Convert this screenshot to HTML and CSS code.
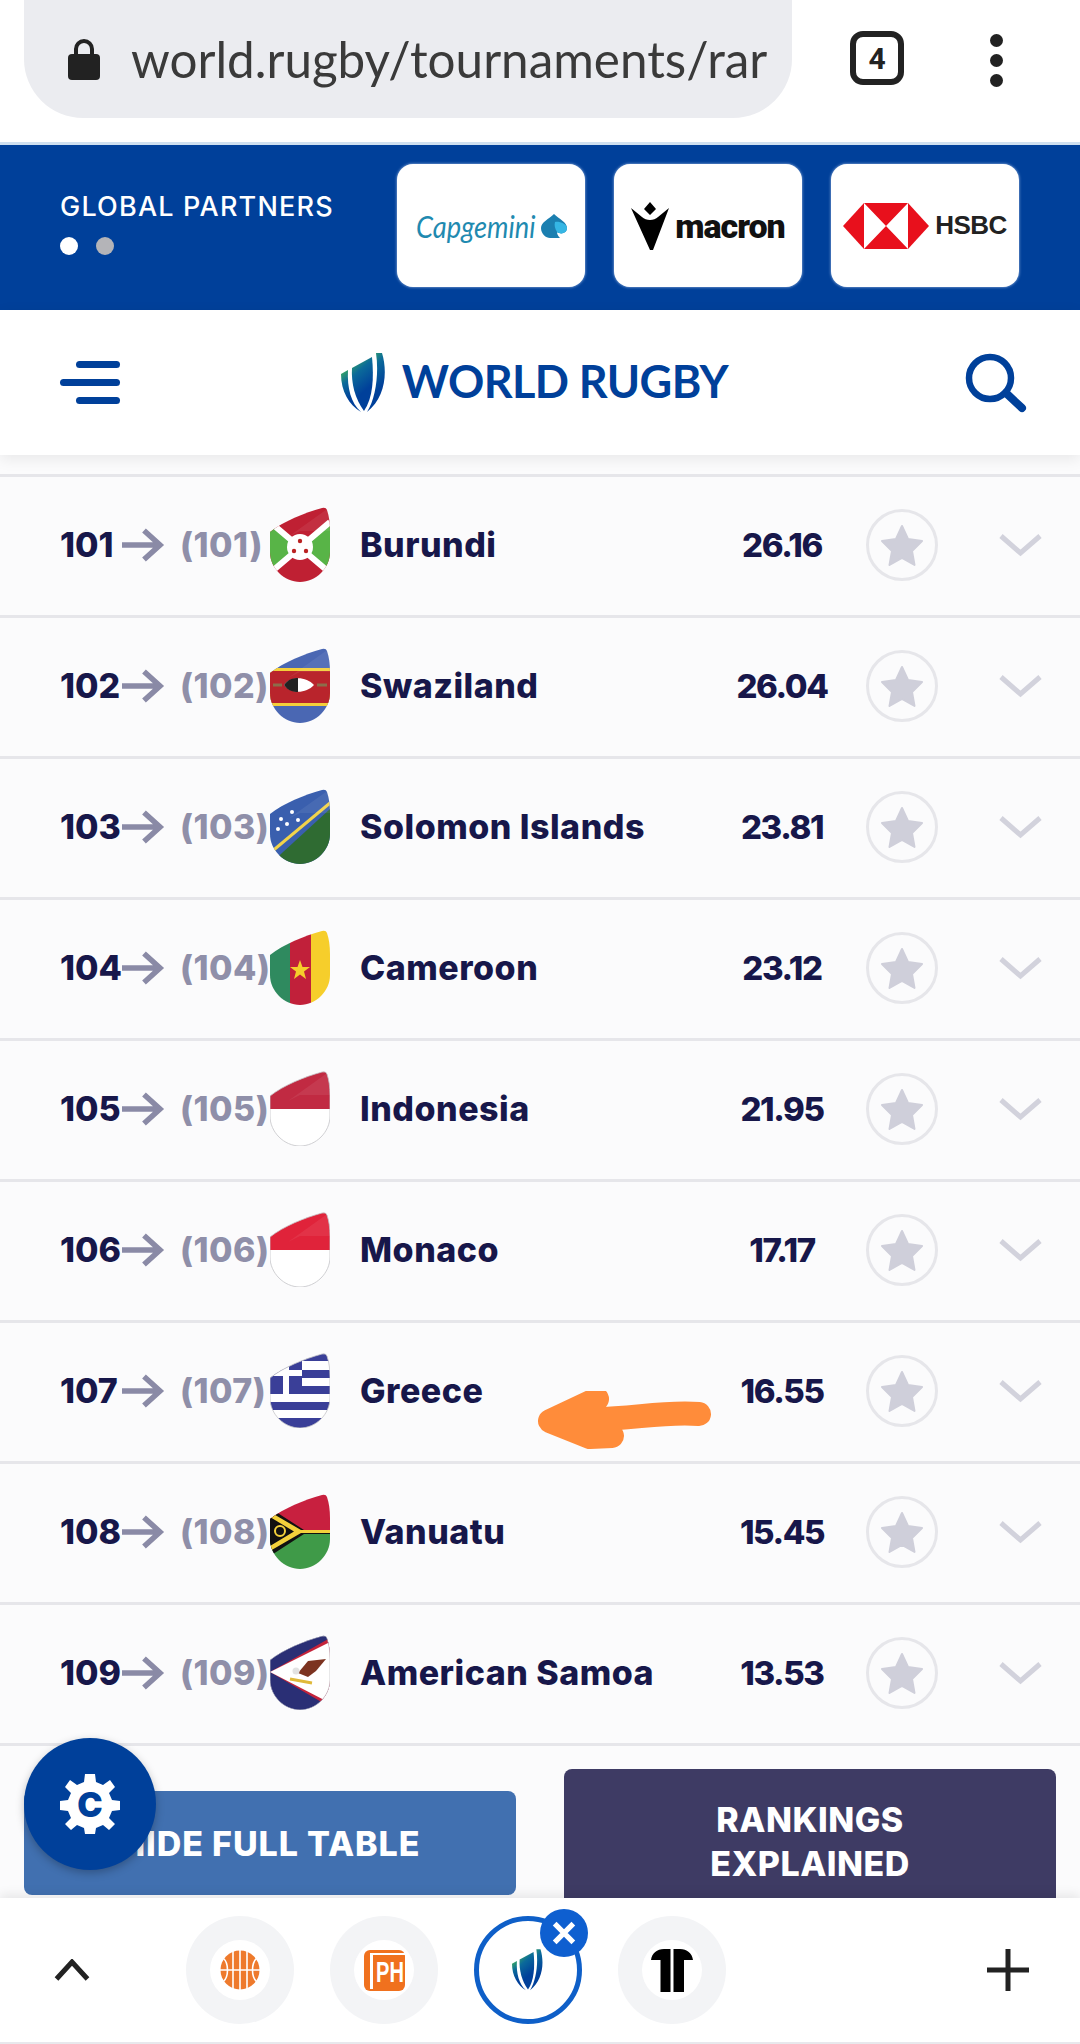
FILE: index.html
```html
<!DOCTYPE html>
<html lang="en">
<head>
<meta charset="utf-8">
<title>World Rugby rankings</title>
<link rel="stylesheet" href="styles.css">
</head>
<body>
<svg class="defs" width="0" height="0" aria-hidden="true">
  <defs>
    <clipPath id="shield"><path d="M0 25C14 14 34 6 52 1Q56 0 57 3C59 9 60 16 60 24V45C60 61 46 75 30 75C14 75 0 61 0 45Z"/></clipPath>
    <path id="shield-line" d="M0 25C14 14 34 6 52 1Q56 0 57 3C59 9 60 16 60 24V45C60 61 46 75 30 75C14 75 0 61 0 45Z" fill="none" stroke="#c4c4c8" stroke-width=".8"/>
    <path id="sheen" d="M18 30L60 0V24H30Z" fill="#fff" opacity=".07"/>
    <symbol id="arrow" viewBox="0 0 43 34"><path d="M0 17H39M22 2.500L38 17L22 31.500" fill="none" stroke="#8a8aa6" stroke-width="5.500"/></symbol>
    <symbol id="star" viewBox="0 0 72 72"><path d="M36 17L42 30L56 32L46 42L48.500 56L36 49L23.500 56L26 42L16 32L30 30Z" fill="#cfcfda" stroke="#cfcfda" stroke-width="2" stroke-linejoin="round"/></symbol>
    <symbol id="chev" viewBox="0 0 43 24"><path d="M2 3L21.500 20L41 3" fill="none" stroke="#d2d2dc" stroke-width="5"/></symbol>
    <linearGradient id="wrg" x1="0" y1="0" x2=".25" y2=".75"><stop offset="0" stop-color="#3fb05a"/><stop offset=".45" stop-color="#0b6a9a"/><stop offset="1" stop-color="#00409a"/></linearGradient>
    <symbol id="wr" viewBox="0 0 46 60">
      <path d="M0 21L7 17C6 35 10 50 20 59C8 52 0 38 0 21Z" fill="url(#wrg)"/>
      <path d="M11 15L31 4C33 25 32 45 23 58C14 46 10 30 11 15Z" fill="url(#wrg)"/>
      <path d="M35 0H41C47 20 44 45 26 59C35 45 38 20 35 0Z" fill="url(#wrg)"/>
    </symbol>
  </defs>
</svg>

<header class="browser">
  <div class="address">
    <svg class="lock" viewBox="0 0 32 42"><path d="M8 18V11a8 8 0 0 1 16 0V18" fill="none" stroke="#222" stroke-width="4"/><rect y="16" width="32" height="26" rx="4" fill="#222"/></svg>
    <span class="url">world.rugby/tournaments/rar</span>
  </div>
  <div class="tabcount">4</div>
  <div class="menu"><i></i><i></i><i></i></div>
</header>

<section class="partners">
  <div class="partners-label">
    <p class="partners-title">GLOBAL PARTNERS</p>
    <div class="dots"><i class="dot on"></i><i class="dot"></i></div>
  </div>
  <div class="partner">
    <span class="capgemini">Capgemini</span>
    <svg class="spade" viewBox="0 0 26 24"><path d="M13 0C18 5 26 8 26 14C26 19 20 21 16 18C16 20 17 22 19 24H9C5 24 0 20 0 14C0 8 8 5 13 0Z" fill="#1b7fb0"/><path d="M14 8C18 7 26 10 26 14C26 19 20 21 16 18C14 15 13 11 14 8Z" fill="#35b6e4"/></svg>
  </div>
  <div class="partner">
    <svg class="macron-mark" viewBox="0 0 38 48"><path d="M19 0L25 7L19 13L13 7Z M0 6L11 15C15 19 23 19 27 15L38 6L22 48H19Z" fill="#000"/></svg>
    <span class="macron">macron</span>
  </div>
  <div class="partner">
    <svg class="hsbc-mark" viewBox="0 0 86 46"><path d="M0 23L21 0H65L86 23L65 46H21Z" fill="#e8101c"/><path d="M21 0L43 23L21 46ZM65 0L43 23L65 46Z" fill="#fff"/></svg>
    <span class="hsbc">HSBC</span>
  </div>
</section>

<nav class="site-nav">
  <div class="burger"><i></i><i class="wide"></i><i></i></div>
  <div class="brand">
    <svg class="brand-mark"><use href="#wr"/></svg>
    <span class="brand-name">WORLD RUGBY</span>
  </div>
  <svg class="search" viewBox="0 0 62 60"><circle cx="25" cy="25" r="21" fill="none" stroke="#00409a" stroke-width="6.500"/><path d="M41 40L57 55" stroke="#00409a" stroke-width="8" stroke-linecap="round"/></svg>
</nav>

<main class="table">
  <div class="row">
    <span class="rank">101</span><svg class="arrow"><use href="#arrow"/></svg><span class="prev">(101)</span>
    <svg class="flag" viewBox="0 0 60 75"><g clip-path="url(#shield)"><rect width="60" height="75" fill="#bf2033"/><path d="M0 18L30 40L0 62Z M60 18L30 40L60 62Z" fill="#58b447"/><path d="M0 15L60 66M60 15L0 66" stroke="#fff" stroke-width="6"/><circle cx="30" cy="40" r="13" fill="#fff"/><circle cx="30" cy="34" r="2.200" fill="#b22"/><circle cx="24" cy="44" r="2.200" fill="#b22"/><circle cx="36" cy="44" r="2.200" fill="#b22"/><use href="#sheen"/></g></svg>
    <span class="name">Burundi</span><span class="score">26.16</span>
    <span class="fav"><svg class="star"><use href="#star"/></svg></span><svg class="chev"><use href="#chev"/></svg>
  </div>
  <div class="row">
    <span class="rank">102</span><svg class="arrow"><use href="#arrow"/></svg><span class="prev">(102)</span>
    <svg class="flag" viewBox="0 0 60 75"><g clip-path="url(#shield)"><rect width="60" height="75" fill="#4a67b3"/><rect y="20" width="60" height="38" fill="#f4cf3a"/><rect y="23" width="60" height="32" fill="#b9242c"/><path d="M3 37H12M47 37H57" stroke="#8c6d4a" stroke-width="3"/><path d="M14 37C20 28 36 28 44 37C36 46 20 46 14 37Z" fill="#fff"/><path d="M14 37C18 31 23 30 28 30V44C23 44 18 43 14 37Z" fill="#222"/><use href="#sheen"/></g></svg>
    <span class="name">Swaziland</span><span class="score">26.04</span>
    <span class="fav"><svg class="star"><use href="#star"/></svg></span><svg class="chev"><use href="#chev"/></svg>
  </div>
  <div class="row">
    <span class="rank">103</span><svg class="arrow"><use href="#arrow"/></svg><span class="prev">(103)</span>
    <svg class="flag" viewBox="0 0 60 75"><g clip-path="url(#shield)"><rect width="60" height="75" fill="#3a5fae"/><path d="M0 75L60 20V75Z" fill="#2f6b32"/><path d="M0 64L60 14" stroke="#f2d34a" stroke-width="3"/><g fill="#fff"><circle cx="11" cy="30" r="2"/><circle cx="22" cy="23" r="2"/><circle cx="8" cy="40" r="2"/><circle cx="17" cy="35" r="2"/><circle cx="28" cy="31" r="2"/></g><use href="#sheen"/></g></svg>
    <span class="name">Solomon Islands</span><span class="score">23.81</span>
    <span class="fav"><svg class="star"><use href="#star"/></svg></span><svg class="chev"><use href="#chev"/></svg>
  </div>
  <div class="row">
    <span class="rank">104</span><svg class="arrow"><use href="#arrow"/></svg><span class="prev">(104)</span>
    <svg class="flag" viewBox="0 0 60 75"><g clip-path="url(#shield)"><rect width="20" height="75" fill="#2f8a5f"/><rect x="20" width="21" height="75" fill="#c1203a"/><rect x="41" width="19" height="75" fill="#f6ce2b"/><path d="M30 30L32.500 37H40L34 41.500L36 49L30 44.500L24 49L26 41.500L20 37H27.500Z" fill="#f6ce2b"/></g></svg>
    <span class="name">Cameroon</span><span class="score">23.12</span>
    <span class="fav"><svg class="star"><use href="#star"/></svg></span><svg class="chev"><use href="#chev"/></svg>
  </div>
  <div class="row">
    <span class="rank">105</span><svg class="arrow"><use href="#arrow"/></svg><span class="prev">(105)</span>
    <svg class="flag" viewBox="0 0 60 75"><g clip-path="url(#shield)"><rect width="60" height="75" fill="#fff"/><rect width="60" height="38" fill="#c12a42"/><use href="#sheen"/></g><use href="#shield-line"/></svg>
    <span class="name">Indonesia</span><span class="score">21.95</span>
    <span class="fav"><svg class="star"><use href="#star"/></svg></span><svg class="chev"><use href="#chev"/></svg>
  </div>
  <div class="row">
    <span class="rank">106</span><svg class="arrow"><use href="#arrow"/></svg><span class="prev">(106)</span>
    <svg class="flag" viewBox="0 0 60 75"><g clip-path="url(#shield)"><rect width="60" height="75" fill="#fff"/><rect width="60" height="38" fill="#e0233a"/><use href="#sheen"/></g><use href="#shield-line"/></svg>
    <span class="name">Monaco</span><span class="score">17.17</span>
    <span class="fav"><svg class="star"><use href="#star"/></svg></span><svg class="chev"><use href="#chev"/></svg>
  </div>
  <div class="row">
    <span class="rank">107</span><svg class="arrow"><use href="#arrow"/></svg><span class="prev">(107)</span>
    <svg class="flag" viewBox="0 0 60 75"><g clip-path="url(#shield)"><rect width="60" height="75" fill="#fff"/><g fill="#3a3f98"><rect width="60" height="8"/><rect y="17" width="60" height="8"/><rect y="33" width="60" height="8"/><rect y="49" width="60" height="8"/><rect y="65" width="60" height="10"/><rect width="32" height="41"/></g><rect x="13" width="6" height="41" fill="#fff"/><rect y="17" width="32" height="6" fill="#fff"/></g><use href="#shield-line"/></svg>
    <span class="name">Greece</span><span class="score">16.55</span>
    <span class="fav"><svg class="star"><use href="#star"/></svg></span><svg class="chev"><use href="#chev"/></svg>
  </div>
  <div class="row">
    <span class="rank">108</span><svg class="arrow"><use href="#arrow"/></svg><span class="prev">(108)</span>
    <svg class="flag" viewBox="0 0 60 75"><g clip-path="url(#shield)"><rect width="60" height="37" fill="#c8203f"/><rect y="37" width="60" height="38" fill="#3f9a48"/><path d="M0 14L34 36H60V40H34L0 62Z" fill="#111"/><path d="M0 18L31 36H60V39H31L0 57Z M0 23V52L24 37.500Z" fill="#f3d13b"/><path d="M0 24V51L22 37.500Z" fill="#111"/><circle cx="10" cy="37" r="5" fill="none" stroke="#f3d13b" stroke-width="2"/></g></svg>
    <span class="name">Vanuatu</span><span class="score">15.45</span>
    <span class="fav"><svg class="star"><use href="#star"/></svg></span><svg class="chev"><use href="#chev"/></svg>
  </div>
  <div class="row">
    <span class="rank">109</span><svg class="arrow"><use href="#arrow"/></svg><span class="prev">(109)</span>
    <svg class="flag" viewBox="0 0 60 75"><g clip-path="url(#shield)"><rect width="60" height="75" fill="#2a2f75"/><path d="M0 37L60 3V72Z" fill="#c4233a"/><path d="M0 37L60 7V68Z" fill="#fff"/><path d="M56 24L38 26L28 38L38 42L46 36Z" fill="#7c3320"/><path d="M20 44L42 48" stroke="#e0b93a" stroke-width="3"/><circle cx="26" cy="36" r="3.500" fill="#e2e2e2"/><use href="#shield-line"/></g></svg>
    <span class="name">American Samoa</span><span class="score">13.53</span>
    <span class="fav"><svg class="star"><use href="#star"/></svg></span><svg class="chev"><use href="#chev"/></svg>
  </div>
</main>

<section class="actions">
  <a class="btn btn-hide">HIDE FULL TABLE</a>
  <a class="btn btn-explain">RANKINGS<br>EXPLAINED</a>
</section>

<footer class="tabs">
  <svg class="up" viewBox="0 0 36 22"><path d="M2.500 20L18 3L33.500 20" fill="none" stroke="#222" stroke-width="5"/></svg>
  <div class="tablist">
    <div class="tab"><span class="favicon"><svg class="fi" viewBox="0 0 40 40"><circle cx="20" cy="20" r="19.500" fill="#ee7a2c"/><path d="M20 0V40M13 1V39M27 1V39M0 20H40M3 8C9 13 9 27 3 32M37 8C31 13 31 27 37 32" fill="none" stroke="#fff" stroke-width="1.600"/></svg></span></div>
    <div class="tab"><span class="favicon"><span class="ph"><span class="ph-text">PH</span></span></span></div>
    <div class="tab tab-active"><span class="favicon"><svg class="fi-wr"><use href="#wr"/></svg></span><span class="close"><svg viewBox="0 0 24 24"><path d="M4 4L20 20M20 4L4 20" stroke="#fff" stroke-width="4.500"/></svg></span></div>
    <div class="tab"><span class="favicon"><svg class="fi-t" viewBox="0 0 42 43"><path d="M0 11C1 4 6 0 13 0H19.500V43H9.500V11ZM22.500 0H29C36 0 41 4 42 11H33V43H22.500Z" fill="#000"/></svg></span></div>
  </div>
  <svg class="plus" viewBox="0 0 42 42"><path d="M21 0V42M0 21H42" stroke="#222" stroke-width="5"/></svg>
</footer>

<div class="cookie"><svg viewBox="0 0 60 60"><path d="M25 0H35L36 8L43 11L50 6L55 13L49 19L52 26L60 27V36L52 37L49 44L55 50L49 56L43 51L36 54L35 60H25L24 54L17 51L11 56L5 50L11 44L8 37L0 36V27L8 26L11 19L5 13L10 6L17 11L24 8Z" fill="#fff"/></svg><span class="cookie-c">C</span></div>

<svg class="scribble" viewBox="0 0 190 70"><path d="M169 23C130 20 100 29 60 28M67 8L20 30L60 46L82 45" fill="none" stroke="#ff8c3a" stroke-width="24" stroke-linecap="round" stroke-linejoin="round"/></svg>
</body>
</html>
```

FILE: styles.css
```css
* { box-sizing: border-box; }
html, body { margin: 0; padding: 0; }
body { position: relative; width: 1080px; height: 2044px; overflow: hidden; background: #fbfbfc; font-family: "Inter", "Liberation Sans", sans-serif; }
i { display: block; }
.defs { position: absolute; }

.browser { height: 145px; background: #fff; border-bottom: 3px solid #cfe0f0; display: flex; align-items: flex-start; }
.address { width: 768px; height: 118px; margin: 0 0 0 24px; background: #ebecf0; border-radius: 0 0 59px 59px / 0 0 59px 59px; display: flex; align-items: center; padding: 0 20px 0 44px; overflow: hidden; }
.lock { width: 32px; height: 42px; flex: none; }
.url { margin-left: 31px; font-family: "Lato", sans-serif; font-size: 49.400px; white-space: nowrap; color: #3a3a3a; }
.tabcount { width: 54px; height: 54px; margin: 31px 0 0 58px; border: 6px solid #222; border-radius: 13px; font-family: "Roboto", sans-serif; font-size: 30px; font-weight: 700; color: #222; display: flex; align-items: center; justify-content: center; }
.menu { margin: 34px 0 0 86px; display: flex; flex-direction: column; gap: 7px; }
.menu i { width: 13px; height: 13px; background: #222; border-radius: 50%; }

.partners { height: 165px; background: #00409a; display: flex; padding: 19px 0 0 60px; gap: 29px; }
.partners-label { width: 308px; padding-top: 26px; }
.partners-title { margin: 0; color: #fff; font-size: 27px; font-weight: 500; letter-spacing: 1.200px; line-height: 34px; white-space: nowrap; }
.dots { display: flex; gap: 18px; margin-top: 13px; }
.dot { width: 18px; height: 18px; border-radius: 50%; background: #b4b4b8; }
.dot.on { background: #fff; }
.partner { width: 188px; height: 123px; background: #fff; border-radius: 16px; box-shadow: 0 0 3px #a9c2e6; display: flex; align-items: center; justify-content: center; gap: 6px; }
.capgemini { font-family: "Lato", sans-serif; font-style: italic; font-size: 31px; color: #1f8ab0; width: 124px; white-space: nowrap; transform: scaleX(.88); transform-origin: left center; }
.spade { width: 26px; height: 24px; margin-left: -5px; }
.macron-mark { width: 38px; height: 48px; }
.macron { font-family: "Roboto", sans-serif; font-weight: 900; font-size: 34px; letter-spacing: -1px; color: #111; }
.hsbc-mark { width: 86px; height: 46px; }
.hsbc { font-family: "Liberation Sans", sans-serif; font-weight: 700; font-size: 26px; color: #222; letter-spacing: -.5px; }

.site-nav { position: relative; z-index: 2; height: 145px; background: #fff; display: flex; align-items: center; padding: 0 53px 0 60px; justify-content: space-between; box-shadow: 0 4px 14px rgba(0,0,0,.08); }
.burger { display: flex; flex-direction: column; align-items: flex-end; gap: 11px; width: 60px; }
.burger i { width: 44px; height: 7px; border-radius: 4px; background: #00409a; }
.burger i.wide { width: 60px; }
.brand { display: flex; align-items: center; gap: 15px; margin-right: 16px; }
.brand-mark { width: 46px; height: 60px; }
.brand-name { margin-bottom: 4px; font-family: "Lato", sans-serif; font-size: 45px; font-weight: 700; color: #00409a; white-space: nowrap; letter-spacing: -.6px; }
.search { width: 62px; height: 60px; }

.table { padding-top: 19px; }
.row { height: 141px; border-top: 3px solid #e6e6ea; display: flex; align-items: center; padding: 0 0 3px 60px; background: #fbfbfc; }
.rank { width: 62px; font-size: 34px; font-weight: 800; color: #17174a; white-space: nowrap; }
.arrow { width: 43px; height: 34px; flex: none; }
.prev { width: 90px; margin-left: 15px; font-size: 34px; font-weight: 800; letter-spacing: .5px; color: #8f8fa9; white-space: nowrap; }
.flag { width: 60px; height: 75px; flex: none; }
.name { flex: 1; margin-left: 30px; font-size: 34px; font-weight: 800; letter-spacing: .5px; color: #17174a; white-space: nowrap; }
.score { width: 120px; text-align: center; font-size: 33px; font-weight: 800; letter-spacing: -1.400px; color: #17174a; }
.fav { width: 72px; height: 72px; margin-left: 24px; border: 3px solid #e6e6ea; border-radius: 50%; display: flex; align-items: center; justify-content: center; flex: none; }
.star { width: 72px; height: 72px; flex: none; }
.chev { width: 43px; height: 24px; margin: 0 38px 0 61px; flex: none; }

.actions { height: 155px; border-top: 3px solid #e6e6ea; padding: 0 24px; display: flex; gap: 48px; align-items: flex-start; overflow: hidden; }
.btn { width: 492px; display: flex; align-items: center; justify-content: center; text-align: center; color: #fff; font-size: 34px; font-weight: 800; letter-spacing: .5px; }
.btn-hide { height: 104px; margin-top: 45px; background: #4170b0; border-radius: 8px; letter-spacing: .9px; }
.btn-explain { height: 160px; margin-top: 23px; padding: 31px 0 45px; line-height: 44px; background: #3e3b64; border-radius: 8px 8px 0 0; }

.tabs { position: relative; z-index: 1; height: 146px; background: #fff; border-bottom: 2px solid #e8e8ec; box-shadow: 0 -4px 10px rgba(0,0,0,.08); display: flex; align-items: flex-start; padding: 18px 51px 0 54px; }
.up { width: 36px; height: 22px; margin-top: 43px; flex: none; }
.tablist { display: flex; gap: 36px; margin-left: 96px; flex: 1; }
.tab { position: relative; width: 108px; height: 108px; border-radius: 50%; background: #f3f4f6; display: flex; align-items: center; justify-content: center; }
.favicon { width: 60px; height: 60px; border-radius: 50%; background: #fff; display: flex; align-items: center; justify-content: center; }
.tab-active { background: #fff; border: 5px solid #0e5fc8; }
.fi { width: 40px; height: 40px; }
.fi-t { width: 42px; height: 43px; }
.fi-wr { width: 32px; height: 42px; }
.ph { position: relative; width: 41px; height: 41px; border-radius: 6px; background: #f0711e; display: flex; align-items: center; justify-content: flex-end; }
.ph::before { content: ""; position: absolute; left: 6px; top: 3px; right: 0; bottom: 2px; border-left: 3px solid #fff; border-top: 2px solid #fff; }
.ph-text { width: 29px; margin-top: 3px; color: #fff; font-family: "Liberation Sans", sans-serif; font-weight: 700; font-size: 30px; line-height: 30px; white-space: nowrap; transform: scaleX(.67); transform-origin: left center; }
.close { position: absolute; right: -11px; top: -12px; width: 48px; height: 48px; border-radius: 50%; background: #0e5fd0; display: flex; align-items: center; justify-content: center; }
.close svg { width: 28px; height: 28px; }
.plus { width: 42px; height: 42px; margin-top: 33px; flex: none; }

.cookie { position: absolute; z-index: 3; left: 24px; top: 1738px; width: 132px; height: 132px; border-radius: 50%; background: #00409a; box-shadow: 0 3px 8px rgba(0,0,0,.25); display: flex; align-items: center; justify-content: center; }
.cookie svg { width: 60px; height: 60px; }
.cookie-c { position: absolute; left: 0; right: 0; top: 0; bottom: 0; display: flex; align-items: center; justify-content: center; font-size: 34px; font-weight: 900; color: #00409a; }
.scribble { position: absolute; z-index: 1; left: 530px; top: 1391px; width: 190px; height: 70px; }
```
